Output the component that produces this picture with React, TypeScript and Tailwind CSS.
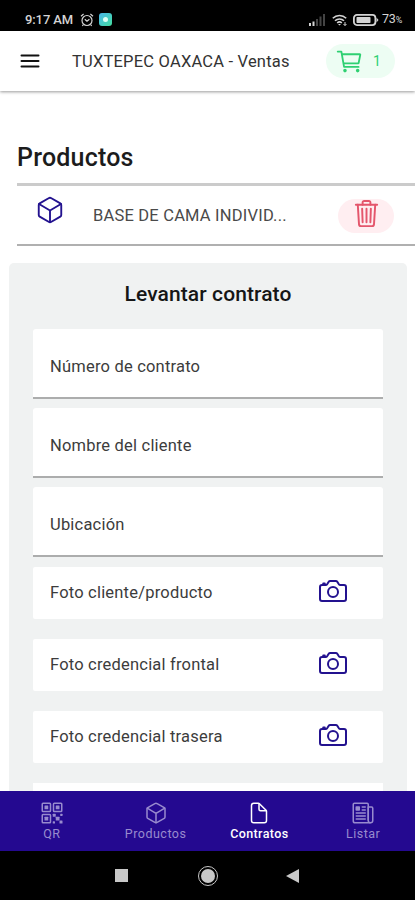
import type { IconType } from 'react-icons';
import {
  IoCameraOutline,
  IoCartOutline,
  IoCubeOutline,
  IoDocumentOutline,
  IoNewspaperOutline,
  IoQrCodeOutline,
  IoTrashOutline,
} from 'react-icons/io5';

const fields = ['Número de contrato', 'Nombre del cliente', 'Ubicación'];

const photos = ['Foto cliente/producto', 'Foto credencial frontal', 'Foto credencial trasera'];

const tabs: { label: string; icon: IconType; active?: boolean }[] = [
  { label: 'QR', icon: IoQrCodeOutline },
  { label: 'Productos', icon: IoCubeOutline },
  { label: 'Contratos', icon: IoDocumentOutline, active: true },
  { label: 'Listar', icon: IoNewspaperOutline },
];

function StatusBar() {
  return (
    <div className="flex h-[31px] shrink-0 items-center bg-black pt-2 pr-[12px] pl-[25px] text-[#d4d4d4]">
      <span className="w-[49px] whitespace-nowrap text-[13px] leading-4 font-medium tracking-[-0.1px]">9:17 AM</span>
      <svg className="ml-[6px] h-[14px] w-[14px]" viewBox="0 0 14 14" fill="none" stroke="currentColor" strokeWidth="1.2">
        <circle cx="7" cy="7.5" r="5" />
        <path d="M1 3.2 3.6 1M13 3.2 10.4 1M4.8 6.3 7 8.3l2.4-2M3.4 11.5l-1 1.5M10.6 11.5l1 1.5" />
      </svg>
      <span className="ml-[5px] flex h-[13px] w-[13px] items-center justify-center rounded-[3px] bg-linear-to-br from-[#4bb6e8] to-[#45dc9c]">
        <span className="h-[5px] w-[5px] rounded-full bg-[#dcfff5]" />
      </span>
      <svg className="ml-auto h-3 w-4" viewBox="0 0 16 12" fill="#d4d4d4">
        <path d="M0 9h2v3H0zM3.5 7.5h2V12h-2z" />
        <path d="M7 5h2v7H7zM10.5 2.5h2V12h-2zM14 0h2v12h-2z" opacity=".32" />
      </svg>
      <svg className="ml-[7px] h-3 w-4" viewBox="0 0 16 12" fill="none" stroke="currentColor" strokeWidth="1.6">
        <path d="M.8 4.3a9.5 9.5 0 0 1 13.4 0M3 6.8a6.4 6.4 0 0 1 9 0M5.2 9a3.3 3.3 0 0 1 4.6 0" />
        <path d="m6 10 1.5 1.5L9 10z" fill="currentColor" stroke="none" />
        <path d="M13 8v3.5M11.5 10l1.5 1.5 1.5-1.5" strokeWidth="1" />
      </svg>
      <svg className="ml-[5px] h-3 w-[26px]" viewBox="0 0 26 12" fill="none">
        <rect x=".9" y=".9" width="21.5" height="10.2" rx="3" stroke="currentColor" strokeWidth="1.8" />
        <rect x="3.5" y="3" width="14" height="6" rx=".8" fill="currentColor" />
        <path d="M23.5 3.5v5l2-2.5z" fill="currentColor" />
      </svg>
      <span className="ml-[3px] flex w-[21px] items-baseline text-[12.5px] leading-4 tracking-[-0.2px]">
        73<span className="text-[9px]">%</span>
      </span>
    </div>
  );
}

function Header() {
  return (
    <header className="relative z-10 flex h-[60px] shrink-0 items-center bg-white pr-[20px] pl-[20px] shadow-[0_1px_3px_rgba(0,0,0,0.4)]">
      <svg className="h-5 w-5" viewBox="0 0 20 20" stroke="#111" strokeWidth="2" strokeLinecap="round">
        <path d="M1.5 4.5h17M1.5 10h17M1.5 15.5h17" />
      </svg>
      <h1 className="ml-[32px] pt-px whitespace-nowrap text-[16.5px] leading-6 tracking-[0.2px] text-[#333]">
        TUXTEPEC OAXACA - Ventas
      </h1>
      <div className="ml-auto flex h-[34px] w-[69px] items-center rounded-full bg-[#edfdf3] pl-[9px] text-[#2fd072]">
        <IoCartOutline className="h-[29px] w-[29px]" />
        <span className="ml-[9px] text-[14px] leading-none">1</span>
      </div>
    </header>
  );
}

function ProductRow() {
  return (
    <div className="ml-[17px] flex h-[63px] shrink-0 items-center border-t-[3px] border-b-2 border-t-[#cbcbcb] border-b-[#b0b0b0]">
      <IoCubeOutline className="mb-[10px] ml-[18px] h-[30px] w-[30px] text-[#23128f]" />
      <span className="ml-[28px] pt-px whitespace-nowrap text-[16.5px] leading-6 tracking-[0.2px] text-[#4a4a4a]">
        BASE DE CAMA INDIVID...
      </span>
      <div className="mt-[2px] mr-[21px] ml-auto flex h-[34px] w-[56px] items-center justify-center rounded-full bg-[#ffeef1] text-[#e4566c]">
        <IoTrashOutline className="mb-[5px] h-[31px] w-[31px]" />
      </div>
    </div>
  );
}

function ContractForm() {
  return (
    <section className="mt-[17px] mr-2 ml-[9px] h-[540px] shrink-0 rounded-t-[5px] bg-[#f0f2f2] px-6 pt-[18px]">
      <h2 className="text-center text-[21px] leading-[26px] font-medium tracking-[0.1px] text-[#161616]">Levantar contrato</h2>
      <div className="mt-[22px] flex flex-col gap-[9px]">
        {fields.map((label) => (
          <div key={label} className="flex h-[70px] items-center rounded-t-[3px] border-b-2 border-[#acadad] bg-white pt-[7px] pl-[17px] text-[16.5px] leading-6 tracking-[0.2px] text-[#3c3c3c]">
            {label}
          </div>
        ))}
      </div>
      <div className="mt-[10px] flex flex-col gap-5">
        {photos.map((label) => (
          <div key={label} className="flex h-[52px] items-center justify-between rounded-[2px] bg-white pr-[34px] pl-[17px] text-[16.5px] leading-6 tracking-[0.2px] text-[#3c3c3c]">
            <span>{label}</span>
            <IoCameraOutline className="mb-[4px] h-[32px] w-[32px] text-[#23128f]" />
          </div>
        ))}
        <div className="h-[52px] bg-white" />
      </div>
    </section>
  );
}

function TabBar() {
  return (
    <nav className="relative z-10 grid h-[60px] shrink-0 grid-cols-4 bg-[#240990]">
      {tabs.map(({ label, icon: Icon, active }) => (
        <div key={label} className={`flex flex-col items-center pt-[10px] ${active ? 'text-white' : 'text-[#988bce]'}`}>
          <Icon className="h-6 w-6" />
          <span className={`text-[12.5px] leading-[18px] ${active ? 'font-medium tracking-[0.4px]' : 'tracking-[0.5px]'}`}>{label}</span>
        </div>
      ))}
    </nav>
  );
}

function SystemNav() {
  return (
    <div className="flex h-[49px] shrink-0 items-center bg-black pl-[115px] text-[#c8c8c8]">
      <span className="h-[13px] w-[13px] bg-current" />
      <span className="ml-[70px] flex h-5 w-5 items-center justify-center rounded-full border-[1.5px] border-current">
        <span className="h-[14px] w-[14px] rounded-full bg-current" />
      </span>
      <svg className="ml-[68px] h-[14px] w-[13px]" viewBox="0 0 13 14" fill="currentColor">
        <path d="M13 0v14L0 7z" />
      </svg>
    </div>
  );
}

export default function App() {
  return (
    <div className="flex h-[900px] w-[415px] flex-col overflow-hidden bg-white font-['Roboto','Liberation_Sans',sans-serif]">
      <StatusBar />
      <Header />
      <main className="flex min-h-0 flex-1 flex-col overflow-hidden">
        <h2 className="mt-[52px] mb-[10px] ml-[17px] text-[25px] leading-[30px] font-medium tracking-[0.2px] text-[#1c1c1c]">Productos</h2>
        <ProductRow />
        <ContractForm />
      </main>
      <TabBar />
      <SystemNav />
    </div>
  );
}
